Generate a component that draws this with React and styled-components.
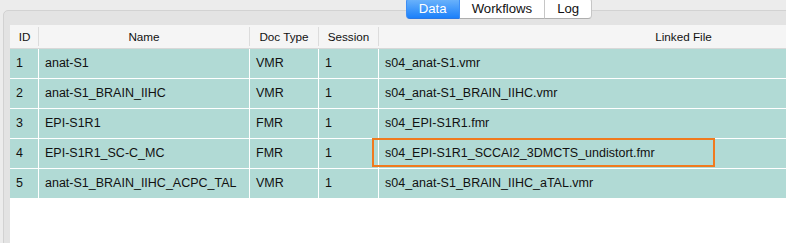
import styled, { createGlobalStyle } from "styled-components";

const GlobalStyle = createGlobalStyle`
    html, body {
        margin: 0;
        padding: 0;
        background: #ececec;
        overflow: hidden;
        font-family: "Liberation Sans", Arial, Helvetica, sans-serif;
        color: #111;
    }
`

const COLUMNS = '28px 210px 68px 59px 1fr';

const Window = styled.div`
    box-sizing: border-box;
    width: 786px;
    height: 243px;
    padding: 10px 0 0 3px;
    overflow: hidden;
`

const GroupBox = styled.div`
    box-sizing: border-box;
    width: 992px;
    height: 260px;
    padding: 0 6px;
    background: #e3e3e3;
    border: 1px solid #d2d2d2;
    border-radius: 5px;
    display: flex;
    flex-direction: column;
`

const TabBar = styled.div`
    display: flex;
    justify-content: center;
    margin-top: -13px;
`

const Tab = styled.div`
    box-sizing: border-box;
    height: 21px;
    padding: 0 12px;
    display: flex;
    align-items: center;
    font-size: 13.2px;
    background: ${props => props.active ? 'linear-gradient(#6db4fb, #1b80fa)' : '#fff'};
    color: ${props => props.active ? '#fff' : '#111'};
    border: 1px solid ${props => props.active ? '#3d8ef5' : '#c6c6c6'};
    border-left-width: ${props => props.first ? '1px' : '0'};
    border-bottom-color: ${props => props.active ? '#2a78e4' : '#aeaeae'};

    &:first-child {
        border-radius: 4px 0 0 4px;
    }
    &:last-child {
        border-radius: 0 4px 4px 0;
    }
`

const Table = styled.div`
    margin-top: 6px;
    flex: 1;
    background: #fff;
`

const HeaderRow = styled.div`
    display: grid;
    grid-template-columns: 28px 211px 69px 60px 1fr;
    height: 23px;
    align-items: center;
    background: #f5f5f5;
    border-bottom: 1px solid #d8d8d8;
`

const HeaderCell = styled.div`
    height: 19px;
    line-height: 19px;
    text-align: center;
    font-size: 11.7px;
    border-left: 1px solid ${props => props.first ? 'transparent' : '#dcdcdc'};
`

const Row = styled.div`
    display: grid;
    grid-template-columns: ${COLUMNS};
    column-gap: 1px;
    margin-bottom: 1px;
`

const Cell = styled.div`
    position: relative;
    height: 29px;
    line-height: 29px;
    padding-left: 6px;
    font-size: 12.5px;
    background: #b1dad5;
    white-space: nowrap;

    ${props => props.highlighted && `
        &::after {
            content: '';
            position: absolute;
            left: -7px;
            top: -1px;
            width: 343px;
            height: 29px;
            box-sizing: border-box;
            border: 2px solid #f07a1e;
        }
    `}
`

const rows = [
    { id: 1, name: 'anat-S1', type: 'VMR', session: 1, file: 's04_anat-S1.vmr' },
    { id: 2, name: 'anat-S1_BRAIN_IIHC', type: 'VMR', session: 1, file: 's04_anat-S1_BRAIN_IIHC.vmr' },
    { id: 3, name: 'EPI-S1R1', type: 'FMR', session: 1, file: 's04_EPI-S1R1.fmr' },
    { id: 4, name: 'EPI-S1R1_SC-C_MC', type: 'FMR', session: 1, file: 's04_EPI-S1R1_SCCAI2_3DMCTS_undistort.fmr', highlighted: true },
    { id: 5, name: 'anat-S1_BRAIN_IIHC_ACPC_TAL', type: 'VMR', session: 1, file: 's04_anat-S1_BRAIN_IIHC_aTAL.vmr' },
]

function App () {
    return (
        <Window>
            <GlobalStyle />
            <GroupBox>
                <TabBar>
                    <Tab active first>Data</Tab>
                    <Tab>Workflows</Tab>
                    <Tab>Log</Tab>
                </TabBar>
                <Table>
                    <HeaderRow>
                        <HeaderCell first>ID</HeaderCell>
                        <HeaderCell>Name</HeaderCell>
                        <HeaderCell>Doc Type</HeaderCell>
                        <HeaderCell>Session</HeaderCell>
                        <HeaderCell>Linked File</HeaderCell>
                    </HeaderRow>
                    {rows.map(row => (
                        <Row key={row.id}>
                            <Cell>{row.id}</Cell>
                            <Cell>{row.name}</Cell>
                            <Cell>{row.type}</Cell>
                            <Cell>{row.session}</Cell>
                            <Cell highlighted={row.highlighted}>{row.file}</Cell>
                        </Row>
                    ))}
                </Table>
            </GroupBox>
        </Window>
    )
}

export default App
